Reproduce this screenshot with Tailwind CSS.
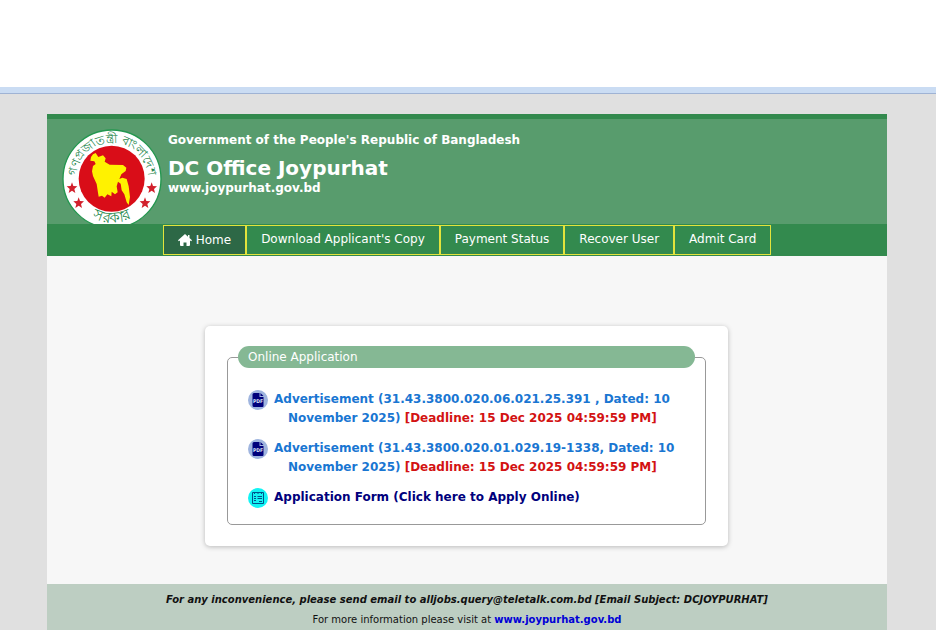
<!DOCTYPE html>
<html lang="en">
<head>
  <meta charset="UTF-8">
  <meta name="viewport" content="width=device-width, initial-scale=1">
  <title>DC Office Joypurhat</title>
  <script src="https://cdn.jsdelivr.net/npm/@tailwindcss/browser@4"></script>
</head>
<body class="bg-[#e0e0e0] min-h-screen text-xs font-['DejaVu_Sans',sans-serif]">

  <!-- top strip -->
  <div class="h-[94px] bg-white flex flex-col justify-end">
    <div class="h-[7px] bg-[#cadcf3] border-b border-[#9fb3d4]"></div>
  </div>

  <div class="pt-5 pr-0.5">
    <div class="max-w-[840px] mx-auto bg-[#f7f7f7]">

      <header class="h-[110px] border-t-5 border-[#338a4e] bg-[#589c6d] flex overflow-hidden text-white font-bold">
        <svg class="ml-[15px] mt-[10px] w-[100px] h-[100px] shrink-0" viewBox="67 148 300 300" role="img" aria-label="Government seal">
          <circle cx="217" cy="298" r="147" fill="#fff" stroke="#23974f" stroke-width="4"/>
          <circle cx="216" cy="297" r="99" fill="#d90d18"/>
          <path fill="#fff200" d="M154 232l6-8 8-4 8 12 14-5 8 9-3 10 15 9 40 1 10 8-2 10-13 10-6 14 9-4 13 4 6 22 4 32-4 24-6-8-7-24-8-12-3-20-8-6-4 14 3 18-8 6-10-8-1 14-12-6-8 10-8-6-10 3-2-12-4-26-11-24-3-14 3-16 8-6-4-8-12-2z"/>
          <g fill="#d2202c">
            <path id="star" d="M97 308l4 11 12 1-9 8 3 12-10-7-10 7 3-12-9-8 12-1z"/>
            <use href="#star" x="20" y="45"/>
            <use href="#star" x="239"/>
            <use href="#star" x="219" y="45"/>
          </g>
          <path id="arcTop" fill="none" d="M111 318a108 108 0 1 1 212 0"/>
          <path id="arcBottom" fill="none" d="M86 298a131 131 0 0 0 262 0"/>
          <text fill="#23864a" font-size="36" font-weight="400" text-anchor="middle"><textPath href="#arcTop" startOffset="50%">গণপ্রজাতন্ত্রী বাংলাদেশ</textPath></text>
          <text fill="#23864a" font-size="44" font-weight="400" text-anchor="middle"><textPath href="#arcBottom" startOffset="50%">সরকার</textPath></text>
        </svg>
        <div class="ml-[6px] pt-[13px]">
          <p class="leading-4">Government of the People's Republic of Bangladesh</p>
          <h1 class="mt-2 text-xl leading-6">DC Office Joypurhat</h1>
          <p class="leading-4">www.joypurhat.gov.bd</p>
        </div>
      </header>

      <nav class="h-8 bg-[#338a4e] flex justify-center items-stretch py-px text-white leading-[18px]">
        <a href="#" class="flex items-center gap-1 px-3.5 border border-[#e3e33c] bg-[#2d6846]">
          <svg class="w-[14px] h-3" viewBox="0 0 14 12" fill="currentColor"><path d="M7 0L0 6.300l.8.900L2 6.500V11q0 1 1 1h2.500V8.500h3V12H11q1 0 1-1V6.500l1.200.7.8-.9L11.500 4V1H10v1.700z"/></svg>
          Home
        </a>
        <a href="#" class="px-3.5 pt-1 border border-[#e3e33c]">Download Applicant's Copy</a>
        <a href="#" class="px-3.5 pt-1 border border-[#e3e33c]">Payment Status</a>
        <a href="#" class="px-3.5 pt-1 border border-[#e3e33c]">Recover User</a>
        <a href="#" class="px-3.5 pt-1 border border-[#e3e33c]">Admit Card</a>
      </nav>

      <main class="pt-[70px] pb-[38px] pr-px">
        <section class="max-w-[523px] mx-auto bg-white rounded-[5px] shadow-[0_1px_5px_rgba(0,0,0,0.25)] px-[22px] pt-5 pb-[21px]">
          <fieldset class="border border-[#999] rounded-[5px] px-[10px] pb-4">
            <legend class="w-full h-[22px] rounded-full bg-[#85b894] text-white px-[10px] leading-[22px]">Online Application</legend>
            <ul class="pt-[22px] px-[10px] font-bold leading-[19px] space-y-[11px]">
              <li class="flex gap-[6px]">
                <svg class="w-5 h-5 shrink-0" viewBox="0 0 20 20"><circle cx="10" cy="10" r="10" fill="#9fb5df"/><path fill="#00007c" d="M6 3h5.500v4h4v9q0 1-1 1H6q-1.500 0-1.500-1.500v-11Q4.500 3 6 3zM12.500 3l3 3h-3z"/><text class="font-['DejaVu_Sans_Condensed',sans-serif]" x="10" y="13" fill="#dbe4f7" font-size="5" text-anchor="middle">PDF</text></svg>
                <a href="#" class="pl-[14px] -indent-[14px] text-[#1976d2]">Advertisement (31.43.3800.020.06.021.25.391 , Dated: 10 November 2025) <span class="text-[#d31212]">[Deadline: 15 Dec 2025 04:59:59 PM]</span></a>
              </li>
              <li class="flex gap-[6px]">
                <svg class="w-5 h-5 shrink-0" viewBox="0 0 20 20"><circle cx="10" cy="10" r="10" fill="#9fb5df"/><path fill="#00007c" d="M6 3h5.500v4h4v9q0 1-1 1H6q-1.500 0-1.500-1.500v-11Q4.500 3 6 3zM12.500 3l3 3h-3z"/><text class="font-['DejaVu_Sans_Condensed',sans-serif]" x="10" y="13" fill="#dbe4f7" font-size="5" text-anchor="middle">PDF</text></svg>
                <a href="#" class="pl-[14px] -indent-[14px] text-[#1976d2]">Advertisement (31.43.3800.020.01.029.19-1338, Dated: 10 November 2025) <span class="text-[#d31212]">[Deadline: 15 Dec 2025 04:59:59 PM]</span></a>
              </li>
              <li class="flex gap-[6px]">
                <svg class="w-5 h-5 shrink-0" viewBox="0 0 20 20" fill="none"><circle cx="10" cy="10" r="10" fill="#12f4f4"/><path stroke="#00538c" d="M4.500 4.500h11v11h-11zM6 8.500h2M9.500 8.500H14M6 10.500h2M9.500 10.500H14M6 12.500h2M11 13.500h3M6.500 4v2M10 4v2M13.500 4v2"/></svg>
                <a href="#" class="text-[#00007c]">Application Form (Click here to Apply Online)</a>
              </li>
            </ul>
          </fieldset>
        </section>
      </main>

      <footer class="bg-[#bdcec2] text-center text-[10px] leading-5 pt-[6px] pb-4 text-[#111]">
        <p class="font-bold italic">For any inconvenience, please send email to alljobs.query@teletalk.com.bd [Email Subject: DCJOYPURHAT]</p>
        <p>For more information please visit at <a href="#" class="font-bold text-[#0000d6]">www.joypurhat.gov.bd</a></p>
      </footer>
    </div>
  </div>

</body>
</html>
